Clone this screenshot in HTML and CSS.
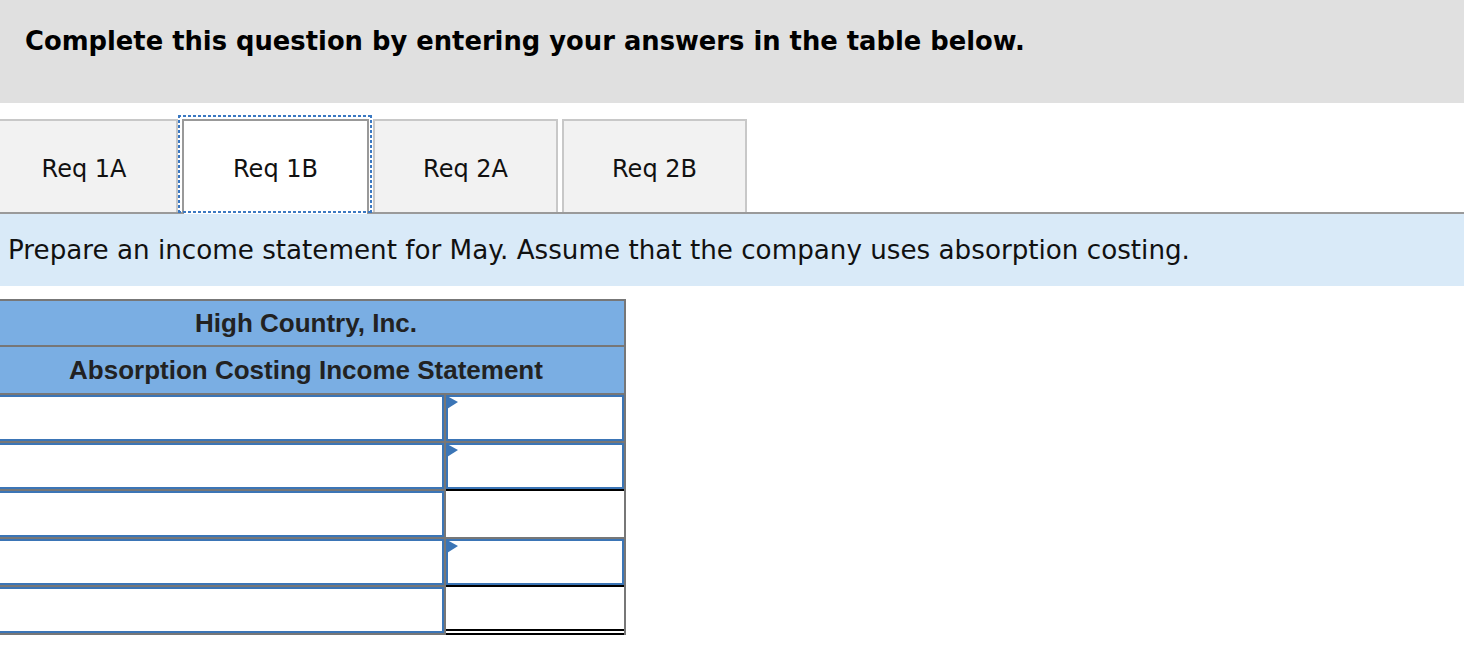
FILE: index.html
```html
<!DOCTYPE html>
<html lang="en">
<head>
<meta charset="utf-8">
<title>Absorption Costing</title>
<link rel="stylesheet" href="styles.css">
</head>
<body>
<div class="banner">
  <h1 class="banner-title">Complete this question by entering your answers in the table below.</h1>
</div>
<div class="tabs" role="tablist">
  <div class="tab tab-first" role="tab">Req 1A</div>
  <div class="tab tab-active" role="tab" aria-selected="true">Req 1B</div>
  <div class="tab" role="tab">Req 2A</div>
  <div class="tab" role="tab">Req 2B</div>
</div>
<div class="instructions">Prepare an income statement for May. Assume that the company uses absorption costing.</div>
<div class="stmt">
  <div class="stmt-head stmt-head-1">High Country, Inc.</div>
  <div class="stmt-head stmt-head-2">Absorption Costing Income Statement</div>

  <div class="cell"><input class="field" type="text"></div>
  <div class="cell"><span class="amount"><input class="field" type="text"><span class="flag"></span></span></div>

  <div class="cell"><input class="field" type="text"></div>
  <div class="cell"><span class="amount"><input class="field" type="text"><span class="flag"></span></span></div>

  <div class="cell"><input class="field" type="text"></div>
  <div class="cell cell-total"></div>

  <div class="cell"><input class="field" type="text"></div>
  <div class="cell"><span class="amount"><input class="field" type="text"><span class="flag"></span></span></div>

  <div class="cell cell-last"><input class="field" type="text"></div>
  <div class="cell cell-total cell-grand"></div>
</div>
</body>
</html>
```

FILE: styles.css
```css
html, body {
  margin: 0;
  padding: 0;
  background: #ffffff;
}

body {
  font-family: "DejaVu Sans", Verdana, sans-serif;
  color: #000;
  overflow: hidden;
}

.banner {
  height: 103px;
  background: #e0e0e0;
  padding: 0 0 0 25px;
  box-sizing: border-box;
  display: flex;
  align-items: flex-start;
}

.banner-title {
  margin: 25px 0 0;
  font-size: 25.8px;
  font-weight: bold;
  line-height: 32px;
}

.tabs {
  display: flex;
  align-items: flex-start;
  gap: 4px;
  margin-top: 16px;
  height: 93px;
  border-bottom: 2px solid #9a9a9a;
  box-sizing: content-box;
}

.tab {
  width: 185px;
  height: 93px;
  box-sizing: border-box;
  background: #f2f2f2;
  border: 2px solid #c8c8c8;
  border-bottom: 0;
  font-size: 24px;
  color: #111;
  padding: 4px 0 0;
  display: flex;
  align-items: center;
  justify-content: center;
  position: relative;
  flex: none;
}

.tab-first {
  width: 178px;
  border-left: 0;
  padding-right: 8px;
}

.tab-active {
  width: 187px;
  height: 95px;
  padding-bottom: 2px;
  background: #ffffff;
  border-color: #999999;
  z-index: 1;
}

.tab-active::after {
  content: "";
  position: absolute;
  top: -6px;
  left: -6px;
  right: -5px;
  bottom: 1px;
  pointer-events: none;
  background:
    repeating-linear-gradient(90deg, #3a78c2 0 3px, transparent 3px 5px) left top / 100% 2px no-repeat,
    repeating-linear-gradient(90deg, #3a78c2 0 3px, transparent 3px 5px) left bottom / 100% 2px no-repeat,
    repeating-linear-gradient(180deg, #3a78c2 0 3px, transparent 3px 5px) left top / 2px 100% no-repeat,
    repeating-linear-gradient(180deg, #3a78c2 0 3px, transparent 3px 5px) right top / 2px 100% no-repeat;
}

.instructions {
  background: #d9eaf8;
  height: 72px;
  display: flex;
  align-items: center;
  padding: 0 0 0 8px;
  font-size: 26.2px;
  color: #111;
}

.stmt {
  display: grid;
  grid-template-columns: 446px 178px;
  column-gap: 2px;
  row-gap: 2px;
  width: max-content;
  margin: 13px 0 0 -4px;
  background: #777777;
  border: 2px solid #777777;
}

.stmt-head {
  grid-column: 1 / span 2;
  background: #7aaee3;
  font-family: "Liberation Sans", Arial, sans-serif;
  font-weight: bold;
  font-size: 26px;
  color: #222;
  display: flex;
  align-items: center;
  justify-content: center;
  padding-right: 10px;
}

.stmt-head-1 {
  height: 44px;
}

.stmt-head-2 {
  height: 46px;
}

.cell {
  background: #ffffff;
  height: 46px;
  box-sizing: border-box;
}

.field {
  display: block;
  width: 100%;
  height: 100%;
  box-sizing: border-box;
  margin: 0;
  padding: 0 6px;
  border: 2px solid #3b75b6;
  border-radius: 0;
  background: #fff;
  font-size: 16px;
  outline: none;
}

.amount {
  display: block;
  position: relative;
  height: 100%;
}

.flag {
  position: absolute;
  left: 1px;
  top: 1px;
  width: 0;
  height: 0;
  border-left: 11px solid #3b75b6;
  border-top: 6px solid transparent;
  border-bottom: 7px solid transparent;
}

.cell-total {
  margin-top: -2px;
  height: 48px;
  border-top: 2px solid #000;
}

.cell-grand {
  height: 50px;
  margin-bottom: -2px;
  border-bottom: 6px double #000;
}
```
